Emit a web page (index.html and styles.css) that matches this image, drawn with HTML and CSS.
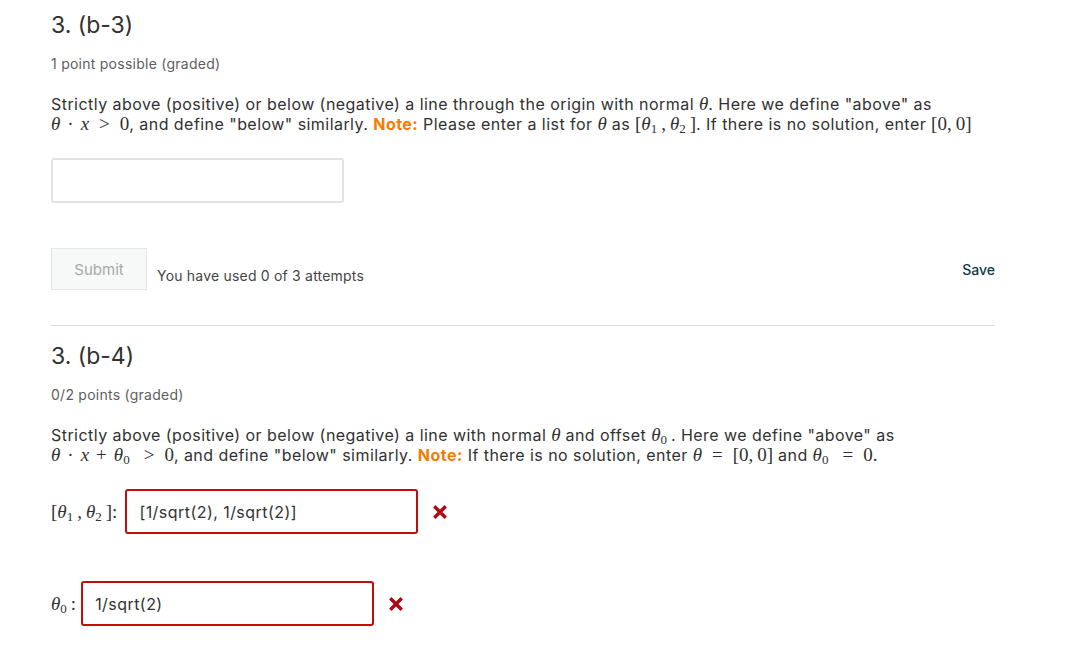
FILE: index.html
```html
<!DOCTYPE html>
<html lang="en">

<head>
    <meta charset="UTF-8">
    <meta name="viewport" content="width=device-width, initial-scale=1.0">
    <title>Problem 3</title>
    <link rel="stylesheet" href="styles.css">
</head>

<body>
    <div class="problem-page">
        <div class="problem">
            <h2 class="problem-title">3. (b-3)</h2>
            <div class="problem-meta">1 point possible (graded)</div>
            <p class="problem-text">
                Strictly above (positive) or below (negative) a line through the origin with normal <span class="m"><i>θ</i></span>. Here we define "above" as<br>
                <span class="m"><i>θ</i><span class="op">·</span><i>x</i><span class="rel">&gt;</span>0</span>, and define "below" similarly. <span class="note">Note:</span> Please enter a list for <span class="m"><i>θ</i></span> as <span class="m">[<i>θ</i><sub>1</sub>,<span class="thin"></span><i>θ</i><sub>2</sub>]</span>. If there is no solution, enter <span class="m">[0,<span class="thin"></span>0]</span>
            </p>
            <input type="text" class="answer-field">

            <div class="action-row">
                <button class="submit-button" disabled>Submit</button>
                <span class="attempts">You have used 0 of 3 attempts</span>
                <button class="save-button">Save</button>
            </div>
        </div>

        <div class="divider"></div>

        <div class="problem">
            <h2 class="problem-title">3. (b-4)</h2>
            <div class="problem-meta">0/2 points (graded)</div>
            <p class="problem-text">
                Strictly above (positive) or below (negative) a line with normal <span class="m"><i>θ</i></span> and offset <span class="m"><i>θ</i><sub>0</sub></span>. Here we define "above" as<br>
                <span class="m"><i>θ</i><span class="op">·</span><i>x</i><span class="op">+</span><i>θ</i><sub>0</sub><span class="rel">&gt;</span>0</span>, and define "below" similarly. <span class="note">Note:</span> If there is no solution, enter <span class="m"><i>θ</i><span class="rel">=</span>[0,<span class="thin"></span>0]</span> and <span class="m"><i>θ</i><sub>0</sub><span class="rel">=</span>0.</span>
            </p>

            <div class="answer-row first">
                <label class="answer-label m">[<i>θ</i><sub>1</sub>,<span class="thin"></span><i>θ</i><sub>2</sub>]:</label>
                <input type="text" class="answer-field wrong" value="[1/sqrt(2), 1/sqrt(2)]">
                <svg class="wrong-mark" viewBox="0 0 14 14" width="14" height="14">
                    <path d="M2.5 2.5 L11.5 11.5 M11.5 2.5 L2.5 11.5" stroke="#b20610" stroke-width="3.4" stroke-linecap="square" fill="none"/>
                </svg>
            </div>

            <div class="answer-row">
                <label class="answer-label m"><i>θ</i><sub>0</sub>:</label>
                <input type="text" class="answer-field wrong" value="1/sqrt(2)">
                <svg class="wrong-mark" viewBox="0 0 14 14" width="14" height="14">
                    <path d="M2.5 2.5 L11.5 11.5 M11.5 2.5 L2.5 11.5" stroke="#b20610" stroke-width="3.4" stroke-linecap="square" fill="none"/>
                </svg>
            </div>
        </div>
    </div>
</body>

</html>
```

FILE: styles.css
```css
* {
    margin: 0;
    padding: 0;
    box-sizing: border-box;
}

body {
    font-family: Inter, 'Noto Sans', sans-serif;
    background: #fff;
    color: #313131;
}

.problem-page {
    width: 995px;
    padding: 11px 0 0 51px;
}

.problem-title {
    font-size: 23px;
    font-weight: 400;
    line-height: 28px;
    color: #313131;
}

.problem-meta {
    margin-top: 16px;
    font-size: 14px;
    line-height: 18px;
    letter-spacing: 0.25px;
    color: #5e5e5e;
}

.problem-text {
    margin-top: 21px;
    font-size: 16px;
    line-height: 20px;
    letter-spacing: 0.45px;
    color: #313131;
}

.note {
    color: #f77b00;
    font-weight: 700;
}

.m {
    font-family: 'Liberation Serif', 'DejaVu Serif', serif;
    font-size: 19px;
    letter-spacing: 0;
}

.m i {
    font-style: italic;
}

.m sub {
    font-size: 13px;
    vertical-align: -3px;
    line-height: 0;
    margin-right: 4px;
}

.m .op {
    margin: 0 7px;
}

.m .rel {
    margin: 0 10px;
}

.m .thin {
    display: inline-block;
    width: 4px;
}

.answer-field {
    display: block;
    margin-top: 24px;
    width: 293px;
    height: 45px;
    border: 2px solid #e3e3e3;
    border-radius: 3px;
    padding: 0 12px;
    font-family: Inter, 'Noto Sans', sans-serif;
    font-size: 16px;
    letter-spacing: 0.45px;
    color: #313131;
    outline: none;
    background: #fff;
}

.answer-field.wrong {
    margin-top: 0;
    border-color: #c20d0d;
}

.action-row {
    margin-top: 45px;
    display: flex;
    align-items: center;
}

.submit-button {
    width: 96px;
    height: 42px;
    background: #f7f8f8;
    border: 1px solid #e6e6e6;
    border-radius: 0;
    font-family: Inter, 'Noto Sans', sans-serif;
    font-size: 15px;
    color: #a8a8a8;
}

.attempts {
    margin-left: 10px;
    padding-top: 12px;
    font-size: 14px;
    letter-spacing: 0.2px;
    color: #454545;
}

.save-button {
    margin-left: auto;
    background: none;
    border: none;
    font-family: Inter, 'Noto Sans', sans-serif;
    font-size: 14px;
    font-weight: 500;
    color: #0d3a4a;
    cursor: pointer;
}

.divider {
    margin-top: 35px;
    border-top: 1px solid #dcdcdc;
    width: 944px;
}

.problem + .divider + .problem .problem-title {
    margin-top: 16px;
}

.answer-row {
    display: flex;
    align-items: center;
}

.answer-row.first {
    margin-top: 24px;
}

.answer-row + .answer-row {
    margin-top: 47px;
}

.answer-label {
    margin-right: 5px;
    color: #313131;
}

.answer-row.first .answer-label {
    margin-right: 8px;
}

.wrong-mark {
    margin-left: 15px;
}
```
